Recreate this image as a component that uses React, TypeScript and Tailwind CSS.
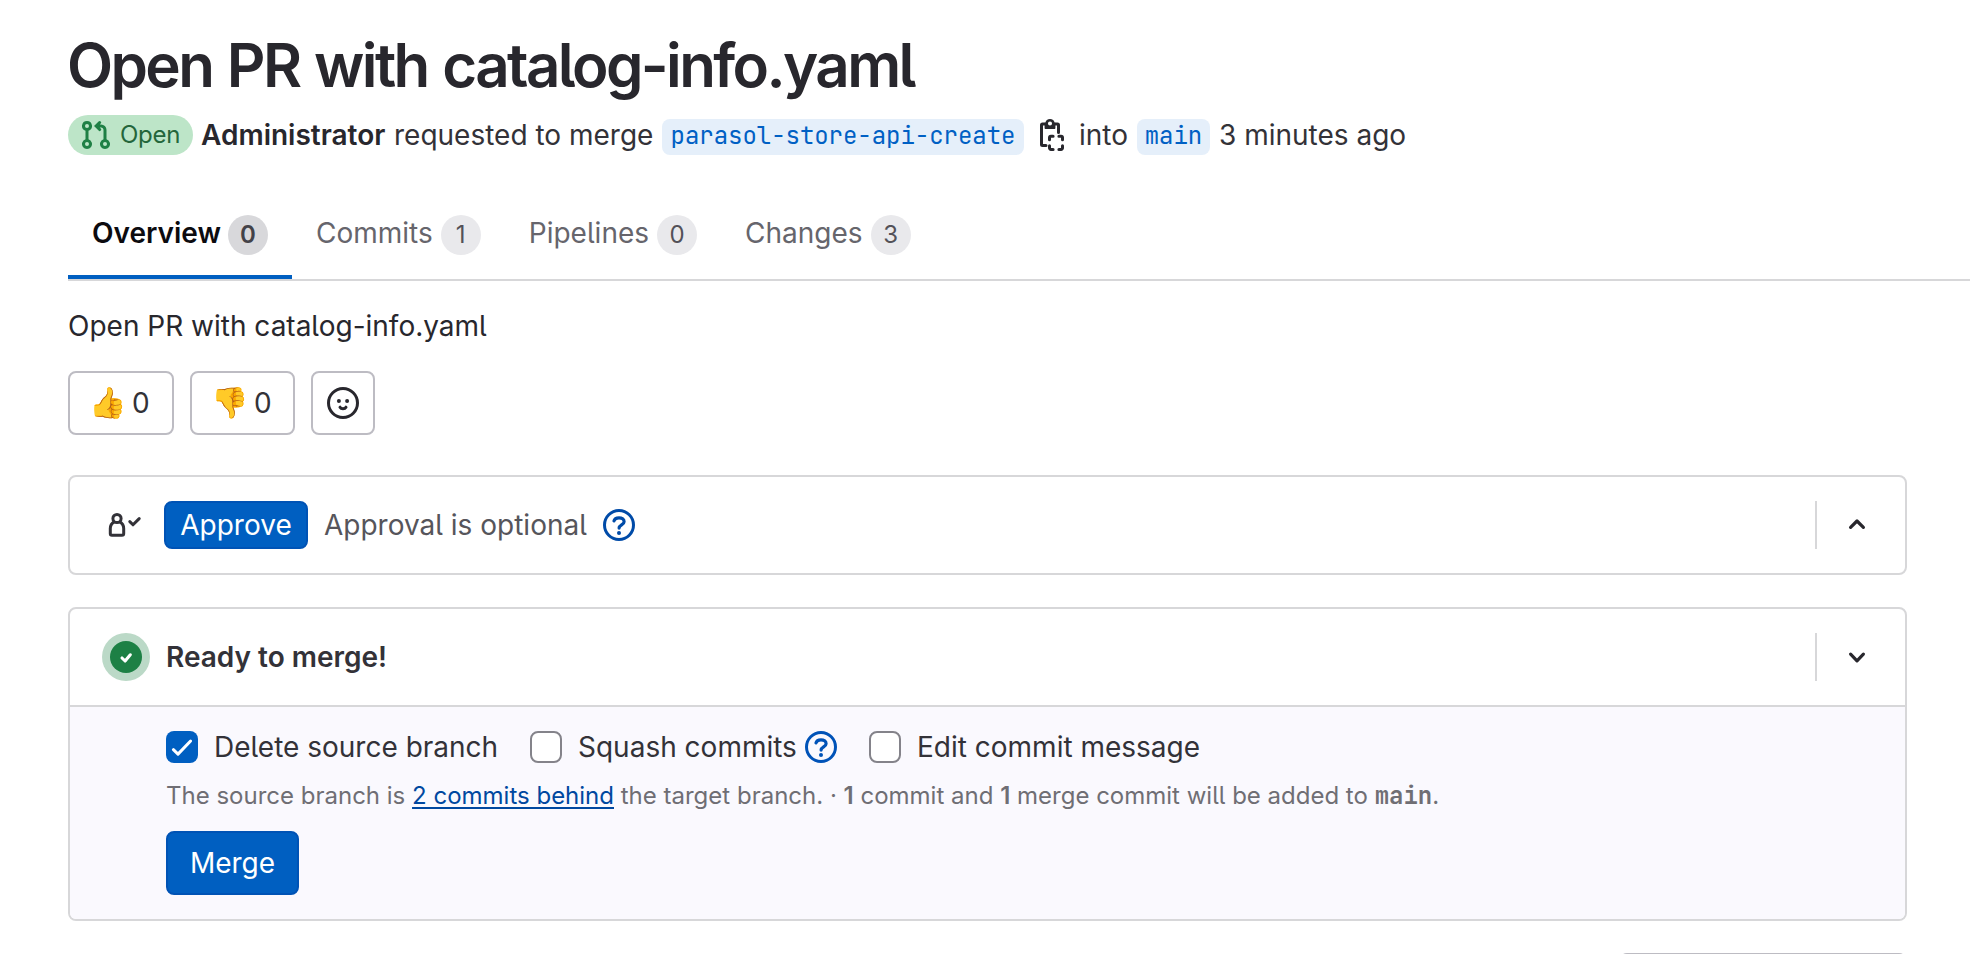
import type { ReactNode } from 'react';

const mono = "font-['JetBrains_Mono','DejaVu_Sans_Mono',monospace]";

function MergeRequestIcon() {
  return (
    <svg viewBox="0 0 16 16" className="size-8 shrink-0 fill-[#1f8045]">
      <path
        fillRule="evenodd"
        d="M10.34 1.22a.75.75 0 0 0-1.06 0L7.53 2.97 7 3.5l.53.53 1.75 1.75a.75.75 0 1 0 1.06-1.06l-.47-.47h.63c.69 0 1.25.56 1.25 1.25v4.614a2.501 2.501 0 1 0 1.5 0V5.5a2.75 2.75 0 0 0-2.75-2.75h-.63l.47-.47a.75.75 0 0 0 0-1.06zM13.5 12.5a1 1 0 1 1-2 0 1 1 0 0 1 2 0zm-9 0a1 1 0 1 1-2 0 1 1 0 0 1 2 0zM3.5 1a2.5 2.5 0 0 0-.75 4.886v4.228a2.501 2.501 0 1 0 1.5 0V5.886A2.501 2.501 0 0 0 3.5 1zm0 3.5a1 1 0 1 0 0-2 1 1 0 0 0 0 2z"
      />
    </svg>
  );
}

function CopyIcon() {
  return (
    <svg viewBox="0 0 16 16" className="size-8 shrink-0" fill="none" stroke="#28272d" strokeWidth="1.5">
      <path d="M5 13.25H3.25a.5.5 0 0 1-.5-.5V3a.5.5 0 0 1 .5-.5h1.5M9.25 2.5h1.5a.5.5 0 0 1 .5.5v3.7" strokeLinecap="round" />
      <path
        fill="#28272d"
        stroke="none"
        fillRule="evenodd"
        d="M7 0a2.35 2.35 0 0 0-2.3 1.85H4.3V4.5c0 .3.2.5.5.5h4.4c.3 0 .5-.2.5-.5V1.85h-.4A2.35 2.35 0 0 0 7 0zm0 3.3a1.02 1.02 0 1 0 0-2.04A1.02 1.02 0 0 0 7 3.3z"
      />
      <path
        strokeLinecap="round"
        d="M6.75 10.4V9.3a.7.7 0 0 1 .7-.7h1.1M11.45 8.6h1.1a.7.7 0 0 1 .7.7v1.1M13.25 13.4v1.1a.7.7 0 0 1-.7.7h-1.1M8.55 15.2h-1.1a.7.7 0 0 1-.7-.7v-1.1"
      />
    </svg>
  );
}

function SmileyIcon() {
  return (
    <svg viewBox="0 0 16 16" className="size-8" fill="none" stroke="#28272d" strokeWidth="1.5">
      <circle cx="8" cy="8" r="7.25" />
      <circle cx="5.95" cy="7" r="1" fill="#28272d" stroke="none" />
      <circle cx="10.05" cy="7" r="1" fill="#28272d" stroke="none" />
      <path d="M6.5 10.1c.3.5.85.75 1.5.75s1.2-.25 1.5-.75" strokeLinecap="round" />
    </svg>
  );
}

function ApprovalIcon() {
  return (
    <svg viewBox="0 0 16 16" className="size-8 shrink-0 overflow-visible" fill="none" stroke="#333238" strokeWidth="1.5">
      <circle cx="4.5" cy="4.75" r="2.05" />
      <path d="M3.1 6.4C1.9 7 1.15 8.3 1.15 9.8v2.5c0 .47.38.85.85.85h5c.47 0 .85-.38.85-.85V9.8c0-1.5-.75-2.8-1.95-3.4" />
      <path d="m10.9 6.3 1.6 1.6 3.1-3.1" strokeLinecap="round" strokeLinejoin="round" />
    </svg>
  );
}

function HelpIcon({ className }: { className: string }) {
  return (
    <svg viewBox="0 0 16 16" className={`size-8 shrink-0 ${className}`} fill="none" stroke="currentColor" strokeWidth="1.5">
      <circle cx="8" cy="8" r="7.25" />
      <path
        d="M5.5 5.95C5.75 4.95 6.75 4.4 8 4.4c1.45 0 2.55.75 2.55 2 0 1.55-2.5 1.6-2.5 3.15"
        strokeLinecap="round"
        strokeWidth="1.6"
      />
      <circle cx="8" cy="12" r="1" fill="currentColor" stroke="none" />
    </svg>
  );
}

function Chevron({ up }: { up?: boolean }) {
  return (
    <svg viewBox="0 0 32 32" className="size-8" fill="none" stroke="#28272d" strokeWidth="3.2" strokeLinecap="round" strokeLinejoin="round">
      <path d={up ? 'M9.6 18.4 16 12l6.4 6.4' : 'M9.6 13.2 16 19.8l6.4-6.6'} />
    </svg>
  );
}

function Tab({ label, count, active }: { label: string; count: number; active?: boolean }) {
  return (
    <div
      className={
        active
          ? 'flex h-20 w-56 items-start gap-[7px] border-b-4 border-[#005fc1] pl-6 font-semibold text-[#0c0b0f]'
          : 'flex h-20 items-start gap-2 px-6 text-[#66656c]'
      }
    >
      <span className="mt-2.5 leading-12">{label}</span>
      <span
        className={`mt-4 flex size-10 items-center justify-center rounded-full text-[24px] ${
          active ? 'bg-[#d8d8db] text-[#434248]' : 'bg-[#e9e9ec] text-[#535158]'
        }`}
      >
        {count}
      </span>
    </div>
  );
}

function Reaction({ emoji, className }: { emoji: string; className: string }) {
  return (
    <button className={`flex h-16 items-center rounded-lg border-2 border-[#bdbcc3] pl-[21px] leading-10 ${className}`}>
      <span className="-mt-0.5 flex w-[34px] shrink-0 justify-center text-[30px] leading-10">{emoji}</span>
      <span className="ml-[7px]">0</span>
    </button>
  );
}

function Toggle({ up }: { up?: boolean }) {
  return (
    <div className="ml-auto flex h-12 w-[90px] items-center border-l-2 border-[#d7d7d9] pl-6">
      <Chevron up={up} />
    </div>
  );
}

function Box() {
  return <span className="size-8 shrink-0 rounded-lg border-2 border-[#84838a] bg-white" />;
}

function Branch({ children, className }: { children: ReactNode; className: string }) {
  return (
    <span
      className={`flex h-9 items-center justify-center rounded-lg bg-[#e5effa] text-[24px] leading-9 tracking-[-0.03px] text-[#0060c4] ${mono} ${className}`}
    >
      <span className="-mt-0.5">{children}</span>
    </span>
  );
}

export default function App() {
  return (
    <div className="h-[954px] w-[1970px] overflow-hidden whitespace-nowrap bg-white pl-[68px] pt-[29px] font-['Inter','Noto_Color_Emoji',sans-serif] text-[28px] text-[#333238] [font-feature-settings:'cv05']">
      <h1 className="-ml-px h-[72px] text-[60px] leading-[72px] font-semibold tracking-[-2.6px] text-[#28272d] [word-spacing:2px]">
        Open PR with catalog-info.yaml
      </h1>

      <div className="mt-3.5 flex h-10 items-center">
        <span className="flex h-10 w-[125px] items-center gap-2 rounded-full bg-[#bde5c8] pl-3 text-[24px] text-[#24663b]">
          <MergeRequestIcon />
          <span className="tracking-[-0.3px]">Open</span>
        </span>
        <span className="ml-2 w-[193px] font-semibold text-[#28272d]">Administrator</span>
        <span className="w-[268px]">requested to merge</span>
        <Branch className="mt-1 w-[362px]">parasol-store-api-create</Branch>
        <span className="ml-3">
          <CopyIcon />
        </span>
        <span className="ml-[11px] w-[58px]">into</span>
        <Branch className="mt-1 w-[73px]">main</Branch>
        <span className="ml-[9px]">3 minutes ago</span>
      </div>

      <div className="mt-11 flex h-[82px] border-b-2 border-[#d7d7d9]">
        <Tab label="Overview" count={0} active />
        <Tab label="Commits" count={1} />
        <Tab label="Pipelines" count={0} />
        <Tab label="Changes" count={3} />
      </div>

      <p className="mt-[21px] h-12 leading-12 text-[#28272d]">Open PR with catalog-info.yaml</p>

      <div className="mt-[21px] flex gap-4">
        <Reaction emoji="👍" className="w-[106px]" />
        <Reaction emoji="👎" className="w-[105px]" />
        <button className="flex size-16 items-center justify-center rounded-lg border-2 border-[#bdbcc3]">
          <SmileyIcon />
        </button>
      </div>

      <section className="mt-10 flex h-[100px] w-[1839px] items-center rounded-lg border-2 border-[#d7d7d9] pl-[38px]">
        <ApprovalIcon />
        <button className="ml-6 h-12 w-36 rounded-lg border-2 border-[#0053b5] bg-[#005fc1] text-white">Approve</button>
        <span className="ml-4 w-[279px] text-[#56555b]">Approval is optional</span>
        <HelpIcon className="text-[#004ba8]" />
        <Toggle up />
      </section>

      <section className="mt-8 h-[314px] w-[1839px] overflow-hidden rounded-lg border-2 border-[#d7d7d9]">
        <div className="flex h-24 items-center pl-8">
          <span className="flex size-12 items-center justify-center rounded-full bg-[#bbd9c7]">
            <svg viewBox="0 0 32 32" className="size-8">
              <circle cx="16" cy="16" r="16" fill="#1d8045" />
              <path d="m12 17 3.1 3 5.2-6.2" fill="none" stroke="#fff" strokeWidth="3.1" strokeLinecap="round" strokeLinejoin="round" />
            </svg>
          </span>
          <span className="ml-4 font-semibold">Ready to merge!</span>
          <Toggle />
        </div>
        <div className="h-[214px] border-t-2 border-[#d7d7d9] bg-[#faf9fe] pl-24 pt-6">
          <div className="flex h-8 items-center">
            <svg viewBox="0 0 32 32" className="size-8">
              <rect width="32" height="32" rx="8" fill="#005fc1" />
              <path d="m7.4 18.7 4.6 4.4L24.6 10" fill="none" stroke="#fff" strokeWidth="3" strokeLinecap="round" strokeLinejoin="round" />
            </svg>
            <span className="ml-4 w-[316px]">Delete source branch</span>
            <Box />
            <span className="ml-4 w-[227px]">Squash commits</span>
            <HelpIcon className="text-[#0053b8]" />
            <span className="w-8" />
            <Box />
            <span className="ml-4">Edit commit message</span>
          </div>
          <p className="mt-[17px] h-8 text-[24px] leading-8 text-[#6f6e74]">
            The source branch is{' '}
            <a className="text-[#0048a0] underline decoration-2 underline-offset-[3px]">2 commits behind</a> the target branch. ·{' '}
            <b className="font-semibold">1</b> commit and <b className="font-semibold">1</b> merge commit will be added to{' '}
            <span className={`font-semibold ${mono}`}>main</span>.
          </p>
          <button className="mt-[19px] block h-16 w-[133px] rounded-lg border-2 border-[#0053b5] bg-[#005fc1] text-white">Merge</button>
        </div>
      </section>

      <div className="ml-[1551px] mt-8 h-16 w-[288px] rounded-lg border-2 border-[#bdbcc3]" />
    </div>
  );
}
